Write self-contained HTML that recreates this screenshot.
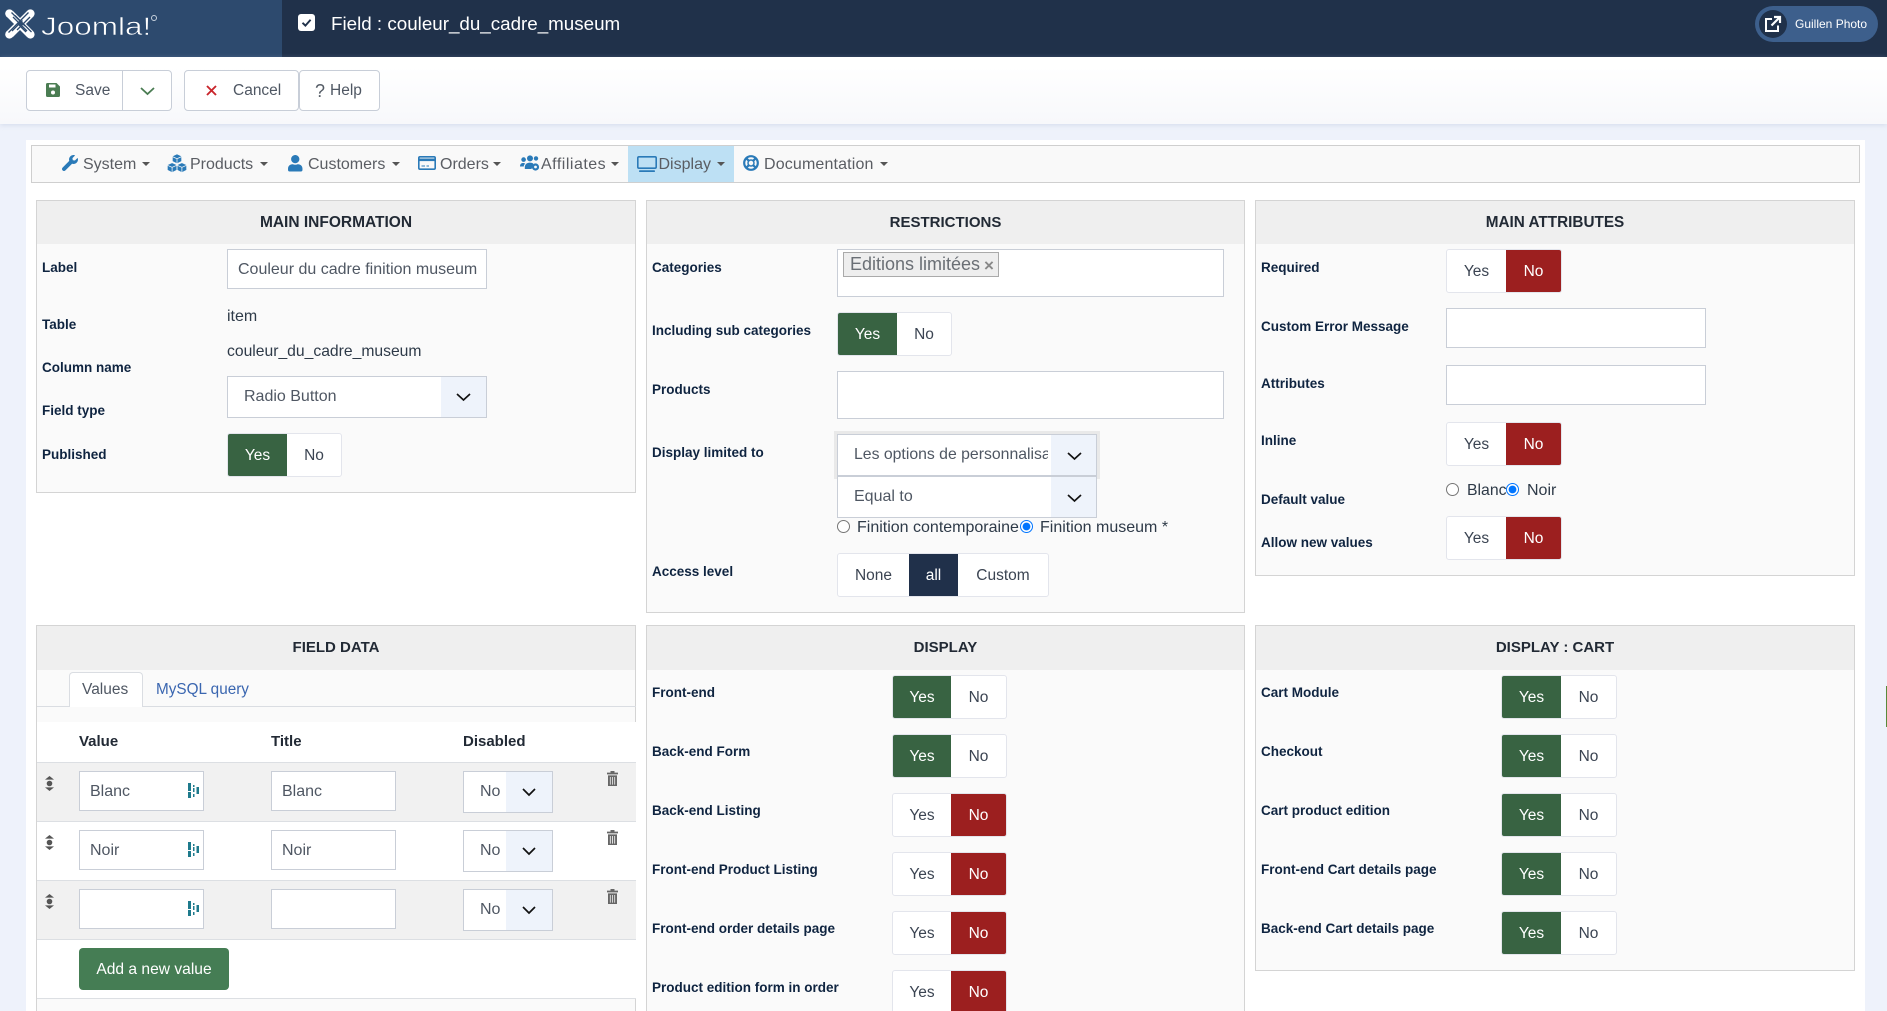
<!DOCTYPE html>
<html lang="en"><head><meta charset="utf-8"><title>Field : couleur_du_cadre_museum</title>
<style>
html,body{margin:0;padding:0;width:1887px;height:1011px;overflow:hidden;background:#eef2fb;font-family:"Liberation Sans",sans-serif}
#r{position:relative;width:1887px;height:1011px;overflow:hidden}
.a{position:absolute}
.t{position:absolute;white-space:nowrap;line-height:20px;font-size:16px;color:#4f5763;margin-top:1px}
.l{position:absolute;white-space:nowrap;line-height:20px;font-size:13.5px;font-weight:bold;color:#0f2440;margin-top:1px}
.p{position:absolute;box-sizing:border-box;border:1px solid #d4d4d4;background:#fafafa}
.h{position:absolute;left:0;right:0;top:0;height:43px;background:#efefef;text-align:center;font-weight:bold;font-size:15px;line-height:44px;color:#222a35}
.i{position:absolute;box-sizing:border-box;background:#fff;border:1px solid #c9ced7}
.s{position:absolute;box-sizing:border-box;background:#fff;border:1px solid #c9ced7;height:42px}
.s u{position:absolute;top:0;bottom:0;right:0;background:#eef3fb;text-decoration:none}
.tg{position:absolute;display:flex;box-sizing:border-box;height:44px;width:115px;border:1px solid #e3e5ec;border-radius:3px;background:#fff;font-size:15.5px;overflow:hidden}
.tg span{display:flex;align-items:center;justify-content:center;color:#3b4452;width:59px;box-sizing:border-box;padding-top:1px}
.tg span:last-child{flex:1;width:auto}
.tg .gr{background:#386342;color:#fff}
.tg .rd{background:#9c1f1f;color:#fff}
.tg .nv{background:#20304a;color:#fff}
.btn{position:absolute;box-sizing:border-box;background:#fff;border:1px solid #c8ced8;height:41px;top:70px}
input[type=radio]{position:absolute;margin:0;width:13px;height:13px}
svg{position:absolute;display:block;overflow:visible}
.c{position:absolute;width:0;height:0;border-left:4px solid transparent;border-right:4px solid transparent;border-top:4px solid #555;top:162px}
</style></head><body><div id="r">

<!-- header -->
<div class="a" style="left:0;top:0;width:1887px;height:57px;background:#20314a"></div>
<div class="a" style="left:0;top:0;width:282px;height:57px;background:#2d4a6e"></div>
<svg style="left:5px;top:9px" width="30" height="30" viewBox="0 0 30 30">
<g fill="none" stroke="#fff" stroke-width="8.4" stroke-linecap="butt"><path d="M5 5 L25 25 M25 5 L5 25"/></g>
<g fill="#fff"><circle cx="4.4" cy="4.6" r="4.2"/><circle cx="25.4" cy="4.6" r="4.2"/><circle cx="4.4" cy="25.4" r="4.2"/><circle cx="25.4" cy="25.4" r="4.2"/></g>
<g fill="none" stroke="#2d4a6e" stroke-width="1.3"><path d="M6.5 3.5 L20 17 M23.5 3.5 L13 14 M3.5 23.5 L14 13 M26.5 23 L10 6.5"/><path d="M12 21 L25 8 M7 22 L17.5 11.5 M8 8 L22 22 M16 18 L21 23"/></g>
<path d="M15 12.2 L17.8 15 L15 17.8 L12.2 15Z" fill="#2d4a6e"/>
</svg>
<div class="t" style="left:40.500px;top:11px;font-size:25px;line-height:30px;color:#fff;-webkit-text-stroke:.55px #2d4a6e;transform:scaleX(1.26);transform-origin:0 50%">Joomla!</div>
<div class="a" style="left:151px;top:15px;width:4px;height:4px;border:1px solid #c8d2de;border-radius:50%"></div>
<div class="a" style="left:298px;top:14px;width:17px;height:17px;background:#fff;border-radius:3px"></div>
<svg style="left:298px;top:14px" width="17" height="17" viewBox="0 0 17 17"><path d="M4.5 8.8 L7.4 11.6 L12.6 5.8" fill="none" stroke="#20314a" stroke-width="1.9"/></svg>
<div class="t" style="left:331px;top:13px;font-size:18.8px;color:#fff">Field : couleur_du_cadre_museum</div>
<div class="a" style="left:1755px;top:6px;width:123px;height:36px;border-radius:18px;background:#3d5f8c"></div>
<div class="a" style="left:1759px;top:10px;width:28px;height:28px;border-radius:50%;background:#20314a"></div>
<svg style="left:1765px;top:16px" width="16" height="16" viewBox="0 0 16 16"><path d="M7 3H1V15H13V9.5" fill="none" stroke="#fff" stroke-width="2"/><path d="M6.5 9.5 L14 2 M9 1H15V7" fill="none" stroke="#fff" stroke-width="2.2"/></svg>
<div class="t" style="left:1795px;top:13px;font-size:12px;color:#fff">Guillen Photo</div>

<!-- toolbar -->
<div class="a" style="left:0;top:57px;width:1887px;height:67px;background:linear-gradient(#fff 15%,#f7f8fb);box-shadow:0 1px 5px rgba(160,175,205,.35)"></div>
<div class="btn" style="left:26px;width:97px;border-radius:4px 0 0 4px"></div>
<div class="btn" style="left:122px;width:50px;border-radius:0 4px 4px 0"></div>
<svg style="left:46px;top:83px" width="14" height="14" viewBox="0 0 14 14"><path fill="#4a7c52" d="M1.5 0H10.5L14 3.5V12.5A1.5 1.5 0 0 1 12.5 14H1.5A1.5 1.5 0 0 1 0 12.5V1.5A1.5 1.5 0 0 1 1.5 0Z"/><rect fill="#fff" x="3" y="1.5" width="6.5" height="3"/><circle fill="#fff" cx="7" cy="9.5" r="2"/></svg>
<div class="t" style="left:75px;top:80px;font-size:15.5px">Save</div>
<svg style="left:139.5px;top:86.5px" width="15" height="8" viewBox="0 0 15 8"><path d="M1 1 L7.5 7 L14 1" fill="none" stroke="#4a7c52" stroke-width="1.8"/></svg>
<div class="btn" style="left:184px;width:115px;border-radius:4px"></div>
<svg style="left:206px;top:85px" width="11" height="11" viewBox="0 0 11 11"><path d="M1 1 L10 10 M10 1 L1 10" stroke="#c9252b" stroke-width="1.9" fill="none"/></svg>
<div class="t" style="left:233px;top:80px;font-size:15.5px">Cancel</div>
<div class="btn" style="left:299px;width:81px;border-radius:4px"></div>
<div class="t" style="left:315px;top:80px;font-size:18px;color:#555c66">?</div>
<div class="t" style="left:330px;top:80px;font-size:15.5px">Help</div>

<!-- content -->
<div class="a" style="left:26px;top:140px;width:1839px;height:871px;background:#fff"></div>
<div class="a" style="left:31px;top:145px;width:1829px;height:38px;box-sizing:border-box;border:1px solid #cfcfcf;background:#f9f9f9"></div>
<div class="a" style="left:628px;top:146px;width:106px;height:36px;background:#bde0f4"></div>

<svg style="left:62px;top:155px" width="16" height="16" viewBox="0 0 512 512"><path fill="#2a7ab8" d="M507.73 109.1c-2.24-9.03-13.54-12.09-20.12-5.51l-74.36 74.36-67.88-11.31-11.31-67.88 74.36-74.36c6.62-6.62 3.43-17.9-5.66-20.16-47.38-11.74-99.55.91-136.58 37.93-39.64 39.64-50.55 97.1-34.05 147.2L18.74 402.76c-24.99 24.99-24.99 65.51 0 90.5 24.99 24.99 65.51 24.99 90.5 0l213.21-213.21c50.12 16.71 107.47 5.68 147.37-34.22 37.07-37.07 49.7-89.32 37.91-136.73z"/></svg>
<div class="t" style="left:83px;top:154px;color:#5a5d63">System</div><div class="c" style="left:142px"></div>

<svg style="left:167px;top:154px" width="20" height="18.5" viewBox="0 0 18 17"><g fill="#2a7ab8" stroke="#f9f9f9" stroke-width=".5"><path d="M9 0 L13.2 2 V6.8 L9 8.8 L4.8 6.8 V2Z"/><path d="M4.5 8 L8.8 10 V14.8 L4.5 17 L.2 14.8 V10Z"/><path d="M13.5 8 L17.8 10 V14.8 L13.5 17 L9.2 14.8 V10Z"/></g><path d="M4.8 2.4 L9 4.3 L13.2 2.4 M9 4.3V8.5 M.2 10.4 L4.5 12.3 L8.8 10.4 M4.5 12.3V16.8 M9.2 10.4 L13.5 12.3 L17.8 10.4 M13.5 12.3V16.8" fill="none" stroke="#f9f9f9" stroke-width=".7"/></svg>
<div class="t" style="left:190px;top:154px;color:#5a5d63">Products</div><div class="c" style="left:260px"></div>

<svg style="left:288px;top:155px" width="14.5" height="16.5" viewBox="0 0 448 512"><path fill="#2a7ab8" d="M224 256c70.7 0 128-57.3 128-128S294.7 0 224 0 96 57.3 96 128s57.3 128 128 128zm89.6 32h-16.7c-22.2 10.2-46.9 16-72.9 16s-50.6-5.8-72.9-16h-16.7C60.2 288 0 348.2 0 422.4V464c0 26.5 21.5 48 48 48h352c26.5 0 48-21.5 48-48v-41.6c0-74.2-60.2-134.4-134.4-134.4z"/></svg>
<div class="t" style="left:308px;top:154px;color:#5a5d63">Customers</div><div class="c" style="left:392px"></div>

<svg style="left:418px;top:156px" width="18" height="14" viewBox="0 0 18 14"><rect x=".8" y=".8" width="16.4" height="12.4" rx="1.2" fill="none" stroke="#2a7ab8" stroke-width="1.6"/><rect x="1" y="2.5" width="16" height="2.6" fill="#2a7ab8"/><path d="M3.5 10H7 M8.5 10H11" stroke="#2a7ab8" stroke-width="1.1"/></svg>
<div class="t" style="left:440px;top:154px;color:#5a5d63">Orders</div><div class="c" style="left:493px"></div>

<svg style="left:520px;top:155px" width="20" height="17" viewBox="0 0 20 17"><g fill="#2a7ab8"><circle cx="3.6" cy="4.6" r="2.3"/><circle cx="10" cy="3.4" r="3"/><circle cx="16" cy="3.4" r="2.2"/><path d="M0 11.5C0 8.8 1.4 8 3.3 8C4.2 8 4.8 8.3 5.2 8.8C4.2 9.6 3.8 10.4 3.8 11.5Z"/><path d="M4.8 14V12C4.8 9.6 6.8 7.6 9.8 7.6C11.4 7.6 12.6 8 13.4 8.8L11.5 14Z"/><circle cx="15.5" cy="12" r="3.6"/></g><circle cx="15.5" cy="12" r="1.4" fill="#f9f9f9"/></svg>
<div class="t" style="left:541px;top:154px;color:#5a5d63;letter-spacing:.5px">Affiliates</div><div class="c" style="left:611px"></div>

<svg style="left:637px;top:156px" width="20" height="16" viewBox="0 0 20 16"><rect x=".8" y=".8" width="18.4" height="11.4" rx="1.2" fill="none" stroke="#2a7ab8" stroke-width="1.6"/><rect x="2" y="14.2" width="16" height="1.8" rx=".8" fill="#2a7ab8"/></svg>
<div class="t" style="left:658.500px;top:154px;color:#5a5d63">Display</div><div class="c" style="left:717px"></div>

<svg style="left:743px;top:155px" width="16" height="16" viewBox="0 0 16 16"><circle cx="8" cy="8" r="6.8" fill="none" stroke="#2a7ab8" stroke-width="2.2"/><circle cx="8" cy="8" r="3" fill="none" stroke="#2a7ab8" stroke-width="1.5"/><path d="M3.2 3.2 L5.8 5.8 M12.8 3.2 L10.2 5.8 M3.2 12.8 L5.8 10.2 M12.8 12.8 L10.2 10.2" stroke="#2a7ab8" stroke-width="2.2"/></svg>
<div class="t" style="left:764px;top:154px;color:#5a5d63;letter-spacing:.15px">Documentation</div><div class="c" style="left:880px"></div>

<!-- MAIN INFORMATION -->
<div class="p" style="left:36px;top:200px;width:600px;height:293px"><div class="h" style="font-size:15.5px">MAIN INFORMATION</div></div>
<div class="l" style="left:42px;top:257px">Label</div>
<div class="i" style="left:227px;top:249px;width:260px;height:40px"></div>
<div class="t" style="left:238px;top:259px">Couleur du cadre finition museum</div>
<div class="l" style="left:42px;top:314px">Table</div>
<div class="t" style="left:227px;top:306px;color:#2e3a48">item</div>
<div class="l" style="left:42px;top:357px">Column name</div>
<div class="t" style="left:227px;top:341px;color:#2e3a48;font-size:15.7px">couleur_du_cadre_museum</div>
<div class="l" style="left:42px;top:400px">Field type</div>
<div class="s" style="left:227px;top:376px;width:260px"><u style="width:45px"></u></div>
<div class="t" style="left:244px;top:386px">Radio Button</div>
<svg style="left:456px;top:393px" width="15" height="8" viewBox="0 0 15 8"><path d="M1 1 L7.5 7 L14 1" fill="none" stroke="#111" stroke-width="1.7"/></svg>
<div class="l" style="left:42px;top:444px">Published</div>
<div class="tg" style="left:227px;top:433px"><span class="gr">Yes</span><span>No</span></div>

<!-- RESTRICTIONS -->
<div class="p" style="left:646px;top:200px;width:599px;height:413px"><div class="h">RESTRICTIONS</div></div>
<div class="l" style="left:652px;top:257px">Categories</div>
<div class="i" style="left:837px;top:249px;width:387px;height:48px"></div>
<div class="a" style="left:843px;top:252px;width:156px;height:25px;box-sizing:border-box;background:#eee;border:1px solid #aaa"></div>
<div class="t" style="left:850px;top:253px;font-size:18px;color:#6a6f75">Editions limitées</div>
<div class="t" style="left:984px;top:255px;font-size:17px;font-weight:bold;color:#888">×</div>
<div class="l" style="left:652px;top:320px">Including sub categories</div>
<div class="tg" style="left:837px;top:312px"><span class="gr">Yes</span><span>No</span></div>
<div class="l" style="left:652px;top:379px">Products</div>
<div class="i" style="left:837px;top:371px;width:387px;height:48px"></div>
<div class="l" style="left:652px;top:442px">Display limited to</div>
<div class="a" style="left:834px;top:431px;width:266px;height:48px;box-sizing:border-box;border:3px solid #e9e9e9"></div>
<div class="s" style="left:837px;top:434px;width:260px"><u style="width:45px"></u></div>
<div class="t" style="left:854px;top:444px;width:194px;overflow:hidden;font-size:15.8px">Les options de personnalisation</div>
<svg style="left:1066.500px;top:452px" width="15" height="8" viewBox="0 0 15 8"><path d="M1 1 L7.5 7 L14 1" fill="none" stroke="#111" stroke-width="1.7"/></svg>
<div class="s" style="left:837px;top:476px;width:260px"><u style="width:45px"></u></div>
<div class="t" style="left:854px;top:486px">Equal to</div>
<svg style="left:1066.500px;top:494px" width="15" height="8" viewBox="0 0 15 8"><path d="M1 1 L7.5 7 L14 1" fill="none" stroke="#111" stroke-width="1.7"/></svg>
<input type="radio" name="a" style="left:837px;top:520px">
<div class="t" style="left:857px;top:517px;color:#2e3a48">Finition contemporaine</div>
<input type="radio" name="a" checked style="left:1020px;top:520px">
<div class="t" style="left:1040px;top:517px;color:#2e3a48">Finition museum *</div>
<div class="l" style="left:652px;top:561px">Access level</div>
<div class="tg" style="left:837px;top:553px;width:212px"><span style="width:71px">None</span><span class="nv" style="width:49px">all</span><span>Custom</span></div>

<!-- MAIN ATTRIBUTES -->
<div class="p" style="left:1255px;top:200px;width:600px;height:376px"><div class="h" style="font-size:15.3px">MAIN ATTRIBUTES</div></div>
<div class="l" style="left:1261px;top:257px">Required</div>
<div class="tg" style="left:1446px;top:249px;width:116px"><span style="width:59px">Yes</span><span class="rd">No</span></div>
<div class="l" style="left:1261px;top:316px">Custom Error Message</div>
<div class="i" style="left:1446px;top:308px;width:260px;height:40px"></div>
<div class="l" style="left:1261px;top:373px">Attributes</div>
<div class="i" style="left:1446px;top:365px;width:260px;height:40px"></div>
<div class="l" style="left:1261px;top:430px">Inline</div>
<div class="tg" style="left:1446px;top:422px;width:116px"><span style="width:59px">Yes</span><span class="rd">No</span></div>
<div class="l" style="left:1261px;top:489px">Default value</div>
<input type="radio" name="b" style="left:1446px;top:483px">
<div class="t" style="left:1467px;top:480px;color:#2e3a48;font-size:15.8px">Blanc</div>
<input type="radio" name="b" checked style="left:1506px;top:483px">
<div class="t" style="left:1527px;top:480px;color:#2e3a48">Noir</div>
<div class="l" style="left:1261px;top:532px">Allow new values</div>
<div class="tg" style="left:1446px;top:516px;width:116px"><span style="width:59px">Yes</span><span class="rd">No</span></div>

<!-- FIELD DATA -->
<div class="p" style="left:36px;top:625px;width:600px;height:400px"><div class="h" style="height:44px">FIELD DATA</div></div>
<div class="a" style="left:37px;top:706px;width:599px;height:1px;background:#dadde2"></div>
<div class="a" style="left:69px;top:672px;width:74px;height:35px;box-sizing:border-box;background:#fff;border:1px solid #dadde2;border-bottom:0;border-radius:4px 4px 0 0"></div>
<div class="t" style="left:82px;top:679px;font-size:15.5px">Values</div>
<div class="t" style="left:156px;top:679px;font-size:15.3px;color:#3a66b0">MySQL query</div>
<div class="a" style="left:37px;top:722px;width:599px;height:277px;background:#fff"></div>
<div class="t" style="left:79px;top:731px;font-size:15px;font-weight:bold;color:#222a35">Value</div>
<div class="t" style="left:271px;top:731px;font-size:15px;font-weight:bold;color:#222a35">Title</div>
<div class="t" style="left:463px;top:731px;font-size:15px;font-weight:bold;color:#222a35">Disabled</div>
<div class="a" style="left:37px;top:762px;width:599px;height:59px;box-sizing:border-box;background:#f1f1f1;border-top:1px solid #dcdfe3"></div>
<div class="a" style="left:37px;top:821px;width:599px;height:59px;box-sizing:border-box;background:#fff;border-top:1px solid #dcdfe3"></div>
<div class="a" style="left:37px;top:880px;width:599px;height:59px;box-sizing:border-box;background:#f1f1f1;border-top:1px solid #dcdfe3"></div>
<div class="a" style="left:37px;top:939px;width:599px;height:60px;box-sizing:border-box;background:#fff;border-top:1px solid #dcdfe3;border-bottom:1px solid #dcdfe3"></div>

<!-- row 1 -->
<svg style="left:45px;top:776px" width="9" height="15" viewBox="0 0 9 15"><path d="M4.5 0 L9 3.6 H0Z M4.5 15 L9 11.4 H0Z" fill="#555"/><circle cx="4.5" cy="7.5" r="2.8" fill="#555"/></svg>
<div class="i" style="left:79px;top:771px;width:125px;height:40px"></div>
<div class="t" style="left:90px;top:781px">Blanc</div>
<svg style="left:188px;top:783px" width="11" height="15" viewBox="0 0 11 15"><path fill="#1e7a8c" d="M0 0H3V8H0Z M0 9H3V15H0Z M5 5H6.500V9H5Z M5 2H6.500V4H5Z M5 11H6.500V14H5Z M8.500 4H11V11H8.500Z"/></svg>
<div class="i" style="left:271px;top:771px;width:125px;height:40px"></div>
<div class="t" style="left:282px;top:781px">Blanc</div>
<div class="s" style="left:463px;top:771px;width:90px"><u style="width:46px"></u></div>
<div class="t" style="left:480px;top:781px">No</div>
<svg style="left:522px;top:788px" width="14" height="8" viewBox="0 0 14 8"><path d="M1 1 L7 7 L13 1" fill="none" stroke="#111" stroke-width="1.7"/></svg>
<svg style="left:606.5px;top:771px" width="11" height="15" viewBox="0 0 11 15"><path fill="#666" d="M3.5 0H7.5V1.6H11V3.4H0V1.6H3.5Z M1 4.4H10V15H1Z"/><path d="M3.3 6V13.6 M5.5 6V13.6 M7.7 6V13.6" stroke="#f1f1f1" stroke-width=".8"/></svg>

<!-- row 2 -->
<svg style="left:45px;top:835px" width="9" height="15" viewBox="0 0 9 15"><path d="M4.5 0 L9 3.6 H0Z M4.5 15 L9 11.4 H0Z" fill="#555"/><circle cx="4.5" cy="7.5" r="2.8" fill="#555"/></svg>
<div class="i" style="left:79px;top:830px;width:125px;height:40px"></div>
<div class="t" style="left:90px;top:840px">Noir</div>
<svg style="left:188px;top:842px" width="11" height="15" viewBox="0 0 11 15"><path fill="#1e7a8c" d="M0 0H3V8H0Z M0 9H3V15H0Z M5 5H6.500V9H5Z M5 2H6.500V4H5Z M5 11H6.500V14H5Z M8.500 4H11V11H8.500Z"/></svg>
<div class="i" style="left:271px;top:830px;width:125px;height:40px"></div>
<div class="t" style="left:282px;top:840px">Noir</div>
<div class="s" style="left:463px;top:830px;width:90px"><u style="width:46px"></u></div>
<div class="t" style="left:480px;top:840px">No</div>
<svg style="left:522px;top:847px" width="14" height="8" viewBox="0 0 14 8"><path d="M1 1 L7 7 L13 1" fill="none" stroke="#111" stroke-width="1.7"/></svg>
<svg style="left:606.5px;top:830px" width="11" height="15" viewBox="0 0 11 15"><path fill="#666" d="M3.5 0H7.5V1.6H11V3.4H0V1.6H3.5Z M1 4.4H10V15H1Z"/><path d="M3.3 6V13.6 M5.5 6V13.6 M7.7 6V13.6" stroke="#fff" stroke-width=".8"/></svg>

<!-- row 3 -->
<svg style="left:45px;top:894px" width="9" height="15" viewBox="0 0 9 15"><path d="M4.5 0 L9 3.6 H0Z M4.5 15 L9 11.4 H0Z" fill="#555"/><circle cx="4.5" cy="7.5" r="2.8" fill="#555"/></svg>
<div class="i" style="left:79px;top:889px;width:125px;height:40px"></div>
<svg style="left:188px;top:901px" width="11" height="15" viewBox="0 0 11 15"><path fill="#1e7a8c" d="M0 0H3V8H0Z M0 9H3V15H0Z M5 5H6.500V9H5Z M5 2H6.500V4H5Z M5 11H6.500V14H5Z M8.500 4H11V11H8.500Z"/></svg>
<div class="i" style="left:271px;top:889px;width:125px;height:40px"></div>
<div class="s" style="left:463px;top:889px;width:90px"><u style="width:46px"></u></div>
<div class="t" style="left:480px;top:899px">No</div>
<svg style="left:522px;top:906px" width="14" height="8" viewBox="0 0 14 8"><path d="M1 1 L7 7 L13 1" fill="none" stroke="#111" stroke-width="1.7"/></svg>
<svg style="left:606.5px;top:889px" width="11" height="15" viewBox="0 0 11 15"><path fill="#666" d="M3.5 0H7.5V1.6H11V3.4H0V1.6H3.5Z M1 4.4H10V15H1Z"/><path d="M3.3 6V13.6 M5.5 6V13.6 M7.7 6V13.6" stroke="#f1f1f1" stroke-width=".8"/></svg>

<div class="a" style="left:79px;top:948px;width:150px;height:42px;background:#457d54;border-radius:4px;color:#fff;font-size:15.6px;line-height:43px;text-align:center">Add a new value</div>

<!-- DISPLAY -->
<div class="p" style="left:646px;top:625px;width:599px;height:400px"><div class="h" style="height:44px">DISPLAY</div></div>
<div class="l" style="left:652px;top:682px">Front-end</div>
<div class="tg" style="left:892px;top:675px"><span class="gr" style="width:58px">Yes</span><span>No</span></div>
<div class="l" style="left:652px;top:741px">Back-end Form</div>
<div class="tg" style="left:892px;top:734px"><span class="gr" style="width:58px">Yes</span><span>No</span></div>
<div class="l" style="left:652px;top:800px">Back-end Listing</div>
<div class="tg" style="left:892px;top:793px"><span style="width:58px">Yes</span><span class="rd">No</span></div>
<div class="l" style="left:652px;top:859px">Front-end Product Listing</div>
<div class="tg" style="left:892px;top:852px"><span style="width:58px">Yes</span><span class="rd">No</span></div>
<div class="l" style="left:652px;top:918px">Front-end order details page</div>
<div class="tg" style="left:892px;top:911px"><span style="width:58px">Yes</span><span class="rd">No</span></div>
<div class="l" style="left:652px;top:977px">Product edition form in order</div>
<div class="tg" style="left:892px;top:970px"><span style="width:58px">Yes</span><span class="rd">No</span></div>

<!-- DISPLAY : CART -->
<div class="p" style="left:1255px;top:625px;width:600px;height:346px"><div class="h" style="height:44px">DISPLAY : CART</div></div>
<div class="l" style="left:1261px;top:682px">Cart Module</div>
<div class="tg" style="left:1501px;top:675px;width:116px"><span class="gr">Yes</span><span>No</span></div>
<div class="l" style="left:1261px;top:741px">Checkout</div>
<div class="tg" style="left:1501px;top:734px;width:116px"><span class="gr">Yes</span><span>No</span></div>
<div class="l" style="left:1261px;top:800px">Cart product edition</div>
<div class="tg" style="left:1501px;top:793px;width:116px"><span class="gr">Yes</span><span>No</span></div>
<div class="l" style="left:1261px;top:859px">Front-end Cart details page</div>
<div class="tg" style="left:1501px;top:852px;width:116px"><span class="gr">Yes</span><span>No</span></div>
<div class="l" style="left:1261px;top:918px">Back-end Cart details page</div>
<div class="tg" style="left:1501px;top:911px;width:116px"><span class="gr">Yes</span><span>No</span></div>

<div class="a" style="left:1886px;top:686px;width:1px;height:41px;background:#5a8a3a"></div>
</div></body></html>
